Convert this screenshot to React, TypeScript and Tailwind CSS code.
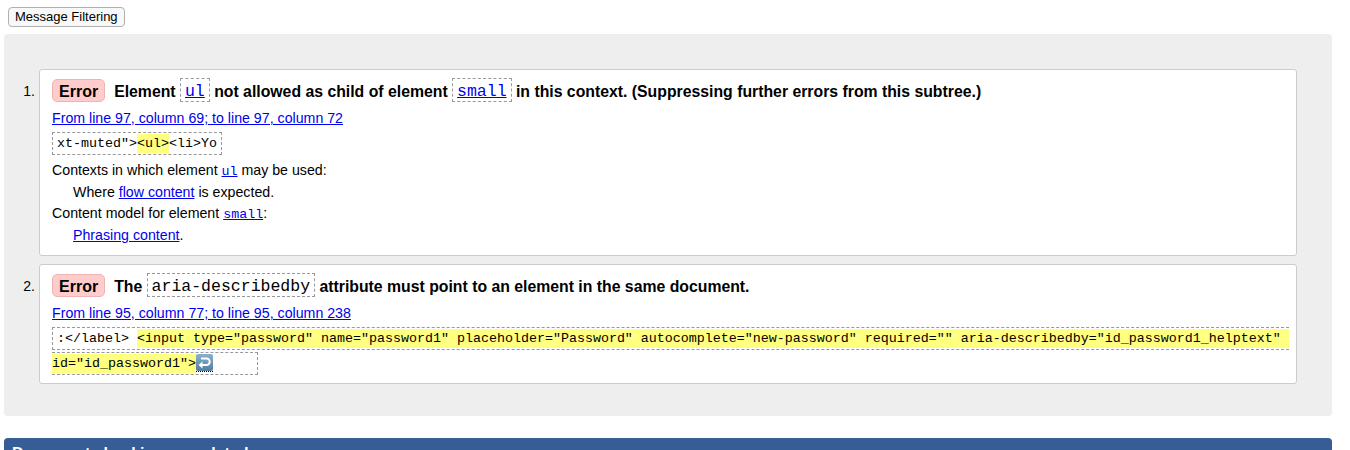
const mono = "font-['Liberation_Mono','DejaVu_Sans_Mono',monospace]";

function ReturnIcon() {
  return (
    <span className="inline-block align-middle border-b border-dotted border-black leading-none">
      <svg width="17" height="17" viewBox="0 0 17 17" className="block">
        <defs>
          <linearGradient id="rg" x1="0" y1="0" x2="0" y2="1">
            <stop offset="0" stopColor="#8ab0d2" />
            <stop offset="1" stopColor="#52809f" />
          </linearGradient>
        </defs>
        <rect x="0" y="0" width="17" height="17" rx="2" fill="url(#rg)" />
        <path d="M5 4.5 H10.5 a3.25 3.25 0 0 1 0 6.5 H6" stroke="#fff" strokeWidth="2" fill="none" />
        <path d="M2.5 11 L6.5 7.5 V14.5 Z" fill="#fff" />
      </svg>
    </span>
  );
}

function Badge() {
  return (
    <span className="inline-block align-top mt-[1px] mr-[9px] text-[16px] bg-[#ffcccc] border border-[#eeb4b4] rounded-[5px] px-[6px] pt-[2px] leading-[19px]">
      Error
    </span>
  );
}

function TitleCode({ children, link }: { children: string; link?: boolean }) {
  return (
    <code
      className={`${mono} inline-block align-top font-normal text-[16.5px] leading-[18px] px-[4px] pt-[4px] border border-dashed border-[#999]`}
    >
      {link ? <a className="text-[#0000ee] underline" href="#">{children}</a> : children}
    </code>
  );
}

function SmallCode({ children }: { children: string }) {
  return (
    <a href="#" className={`${mono} text-[13.33px] leading-none text-[#0000ee] underline`}>
      {children}
    </a>
  );
}

export default function App() {
  return (
    <div className="font-['Liberation_Sans',Arial,sans-serif] text-black bg-white min-h-[450px] overflow-hidden">
      <div className="pt-[7px] pl-[8px] leading-none">
        <button className="h-[20px] px-[6px] text-[13px] leading-[18px] border border-[#b0b0b0] rounded-[4px] bg-[#f8f8f8] text-black">
          Message Filtering
        </button>
      </div>

      <div className="ml-[4px] mr-[18px] mt-[7px] bg-[#eeeeee] rounded-[4px] pt-[35px] pb-[32px] pr-[35px]">
        <ol className="flex flex-col gap-[8px]">
          <li className="flex">
            <div className="w-[35px] shrink-0 text-right pr-[4px] pt-[10px] text-[14px] leading-[24px]">1.</div>
            <div className="flex-1 min-w-0 bg-white border border-[#cccccc] rounded-[3px] px-[12px] pt-[8px] pb-[9px]">
              <p className="text-[15.8px] font-bold leading-[27px]">
                <Badge />
                Element <TitleCode link>ul</TitleCode> not allowed as child of element{" "}
                <TitleCode link>small</TitleCode> in this context. (Suppressing further errors from this subtree.)
              </p>
              <p className="mt-[3px] text-[14.2px] leading-[20px]">
                <a href="#" className="text-[#0000ee] underline">From line 97, column 69; to line 97, column 72</a>
              </p>
              <p className={`mt-[3px] ${mono} text-[13.33px] leading-[25px]`}>
                <code className="whitespace-pre-wrap border border-dashed border-[#999] px-[4px] py-[3px]">
                  xt-muted"&gt;<mark className="bg-[#ffff80] text-black py-[2px]">&lt;ul&gt;</mark>&lt;li&gt;Yo
                </code>
              </p>
              <div className="mt-[4px] text-[14.2px] leading-[21px]">
                <div className="h-[21px]">Contexts in which element <SmallCode>ul</SmallCode> may be used:</div>
                <div className="h-[21px] mt-[1px] pl-[21px]">
                  Where <a href="#" className="text-[#0000ee] underline">flow content</a> is expected.
                </div>
                <div className="h-[21px]">Content model for element <SmallCode>small</SmallCode>:</div>
                <div className="h-[21px] mt-[1px] pl-[21px]">
                  <a href="#" className="text-[#0000ee] underline">Phrasing content</a>.
                </div>
              </div>
            </div>
          </li>

          <li className="flex">
            <div className="w-[35px] shrink-0 text-right pr-[4px] pt-[10px] text-[14px] leading-[24px]">2.</div>
            <div className="flex-1 min-w-0 bg-white border border-[#cccccc] rounded-[3px] px-[12px] pt-[8px] pb-[7px]">
              <p className="text-[15.8px] font-bold leading-[27px]">
                <Badge />
                The <TitleCode>aria-describedby</TitleCode> attribute must point to an element in the same document.
              </p>
              <p className="mt-[3px] text-[14.2px] leading-[20px]">
                <a href="#" className="text-[#0000ee] underline">From line 95, column 77; to line 95, column 238</a>
              </p>
              <p className={`mt-[3px] ${mono} text-[13.33px] leading-[25px]`}>
                <code className="whitespace-pre-wrap border border-dashed border-[#999] px-[4px] py-[3px]">
                  {":</label> "}
                  <mark className="bg-[#ffff80] text-black py-[2px]">
                    {'<input type="password" name="password1" placeholder="Password" autocomplete="new-password" required="" aria-describedby="id_password1_helptext" id="id_password1">'}
                  </mark>
                  <ReturnIcon />
                  {"     "}
                </code>
              </p>
            </div>
          </li>
        </ol>
      </div>

      <div className="ml-[4px] mr-[18px] mt-[22px] bg-[#365d95] rounded-t-[4px] pl-[8px] pt-[4px] h-[40px] text-white font-bold text-[16px] leading-[24px]">
        Document checking completed.
      </div>
    </div>
  );
}
